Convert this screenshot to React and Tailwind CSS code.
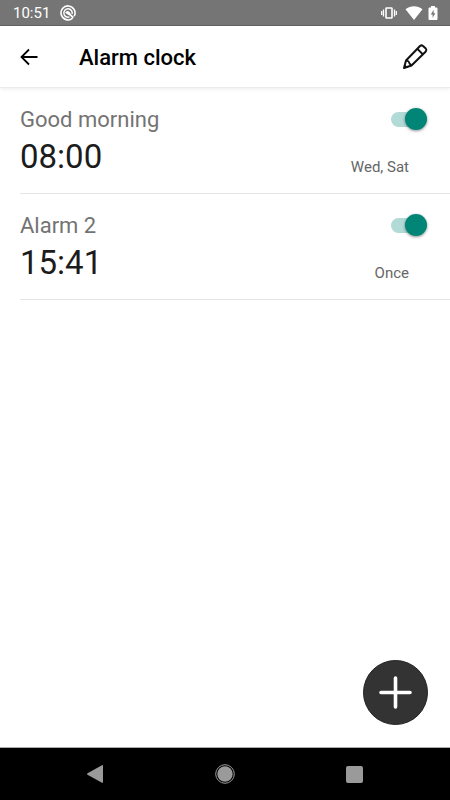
import { useState } from 'react';

const INITIAL_ALARMS = [
  { id: 1, name: 'Good morning', time: '08:00', repeat: 'Wed, Sat', enabled: true },
  { id: 2, name: 'Alarm 2', time: '15:41', repeat: 'Once', enabled: true },
];

function StatusBar() {
  return (
    <div className="flex h-[26px] items-center border-b border-[#626262] bg-[#757575] px-3 text-white">
      <span className="ml-px pt-px text-[15px] leading-6">10:51</span>
      <svg viewBox="0 0 16 16" className="ml-2.5 h-4 w-4" fill="none" stroke="currentColor" aria-hidden>
        <path d="M12.600 13.200A7 7 0 1 1 14.200 11.200" strokeWidth="1.6" />
        <path d="M9.500 11.900A4.200 4.200 0 1 1 12.100 9" strokeWidth="1.4" />
        <path d="M9 8.800 13.400 12.600" strokeWidth="1.8" />
        <path d="M5 7.800Q7 4.800 9.600 7L11 9.800 9 10.200Z" fill="currentColor" stroke="none" />
      </svg>
      <div className="ml-auto flex items-center">
        <svg viewBox="0 0 16 14" className="h-[14px] w-4" fill="none" stroke="currentColor" aria-hidden>
          <rect x="5" y="2" width="6" height="10" strokeWidth="1.6" rx="0.6" />
          <path d="M2.500 3.500v7M13.500 3.500v7" strokeWidth="1.3" />
          <path d="M.7 5v4M15.300 5v4" strokeWidth="1.3" />
        </svg>
        <svg viewBox="0 0 18 14" className="ml-2 h-[14px] w-[18px]" fill="currentColor" aria-hidden>
          <path d="M0.500 3.200C5.500-.8 12.500-.8 17.500 3.200L9 14Z" />
        </svg>
        <svg viewBox="0 0 10 14" className="ml-[5px] h-[14px] w-[10px]" aria-hidden>
          <path d="M3 0h4v1.500h1.500q1 0 1 1V13q0 1-1 1h-7q-1 0-1-1V2.500q0-1 1-1H3Z" fill="currentColor" />
          <path d="M5.600 3.800 2.800 8.400h1.800v3.400L7.400 7.200H5.600Z" fill="#757575" />
        </svg>
      </div>
    </div>
  );
}

function AppHeader() {
  return (
    <header className="flex h-[62px] items-center border-b border-[#ececec] pl-4 pr-[21px] pt-px shadow-[0_1px_4px_rgba(0,0,0,0.08)]">
      <button type="button" aria-label="Back" className="p-1">
        <svg viewBox="0 0 18 18" className="h-[18px] w-[18px]" fill="none" stroke="#000" strokeWidth="1.800" aria-hidden>
          <path d="M17.500 9H1.800M9 1.500 1.500 9 9 16.500" />
        </svg>
      </button>
      <h1 className="ml-[37px] pt-px text-[22px] font-medium leading-7 text-black">Alarm clock</h1>
      <button type="button" aria-label="Edit alarms" className="ml-auto">
        <svg
          viewBox="0 0 28 28"
          className="h-7 w-7"
          fill="none"
          stroke="#111"
          strokeWidth="2"
          strokeLinejoin="round"
          aria-hidden
        >
          <path d="M3 25 5 17.500 19 3Q20.500 1.800 22 3L24.800 5.500Q26 7 24.800 8.500L10.500 22.500Z" />
          <path d="M16.500 6 22 11.500M5 17.500 7.500 18.300 8.500 20.500 10.500 22.500" strokeWidth="1.800" />
          <path d="M2.500 25.500 3.800 21.500 7 24.300Z" fill="#111" stroke="none" />
        </svg>
      </button>
    </header>
  );
}

function Toggle({ label, checked, onChange }) {
  return (
    <span className="relative flex h-[22px] w-9 items-center">
      <input
        type="checkbox"
        role="switch"
        aria-label={label}
        checked={checked}
        onChange={onChange}
        className="peer h-[15px] w-9 cursor-pointer appearance-none rounded-full bg-[#b9b9b9] checked:bg-[#b2dad6]"
      />
      <span className="pointer-events-none absolute left-0 top-0 h-[22px] w-[22px] rounded-full bg-[#f1f1f1] shadow-[0_1px_3px_rgba(0,0,0,0.45)] transition-transform peer-checked:translate-x-[14px] peer-checked:bg-[#008577]" />
    </span>
  );
}

function AlarmRow({ alarm, onToggle }) {
  return (
    <li className="ml-5 flex h-[106px] justify-between border-b border-[#e5e5e5] pt-4">
      <div>
        <h2 className="text-[22px] leading-8 text-[#737373]">{alarm.name}</h2>
        <p className="text-[33px] leading-[42px] text-[#1c1c1c]">{alarm.time}</p>
      </div>
      <div className="flex flex-col items-end pr-[23px] pt-1">
        <Toggle label={`${alarm.name}, ${alarm.time}`} checked={alarm.enabled} onChange={onToggle} />
        <p className="mr-[18px] mt-[27px] text-[15px] leading-5 text-[#666]">{alarm.repeat}</p>
      </div>
    </li>
  );
}

function NavigationBar() {
  return (
    <nav className="flex h-[53px] items-center justify-around border-t border-[#aaa] bg-black pl-[30px] pr-8 text-[#9a9a9a]">
      <button type="button" aria-label="System back">
        <svg viewBox="0 0 18 20" className="h-5 w-[18px]" fill="currentColor" aria-hidden>
          <path d="M16 1.200Q17 .8 17 2V18Q17 19.200 16 18.700L1.500 10.700Q.5 10 1.500 9.300Z" />
        </svg>
      </button>
      <button type="button" aria-label="Home">
        <svg viewBox="0 0 20 20" className="h-5 w-5" fill="none" aria-hidden>
          <circle cx="10" cy="10" r="9.300" stroke="currentColor" />
          <circle cx="10" cy="10" r="7.700" fill="currentColor" />
        </svg>
      </button>
      <button type="button" aria-label="Recent apps">
        <span className="block h-[17px] w-[17px] rounded-[2px] bg-[#9a9a9a]" />
      </button>
    </nav>
  );
}

export default function App() {
  const [alarms, setAlarms] = useState(INITIAL_ALARMS);

  const toggleAlarm = (id) =>
    setAlarms((list) => list.map((a) => (a.id === id ? { ...a, enabled: !a.enabled } : a)));

  return (
    <div className="flex min-h-screen flex-col bg-white font-['Roboto',sans-serif]">
      <StatusBar />
      <AppHeader />
      <main className="relative flex-1">
        <ul>
          {alarms.map((alarm) => (
            <AlarmRow key={alarm.id} alarm={alarm} onToggle={() => toggleAlarm(alarm.id)} />
          ))}
        </ul>
        <button
          type="button"
          aria-label="Add alarm"
          className="absolute bottom-[22px] right-[22px] flex h-[65px] w-[65px] items-center justify-center rounded-full border border-[#222] bg-[#333]"
        >
          <svg viewBox="0 0 33 33" className="h-[33px] w-[33px]" stroke="#fff" strokeWidth="3.600" strokeLinecap="round" aria-hidden>
            <path d="M16.500 2v29M2 16.500h29" />
          </svg>
        </button>
      </main>
      <NavigationBar />
    </div>
  );
}
